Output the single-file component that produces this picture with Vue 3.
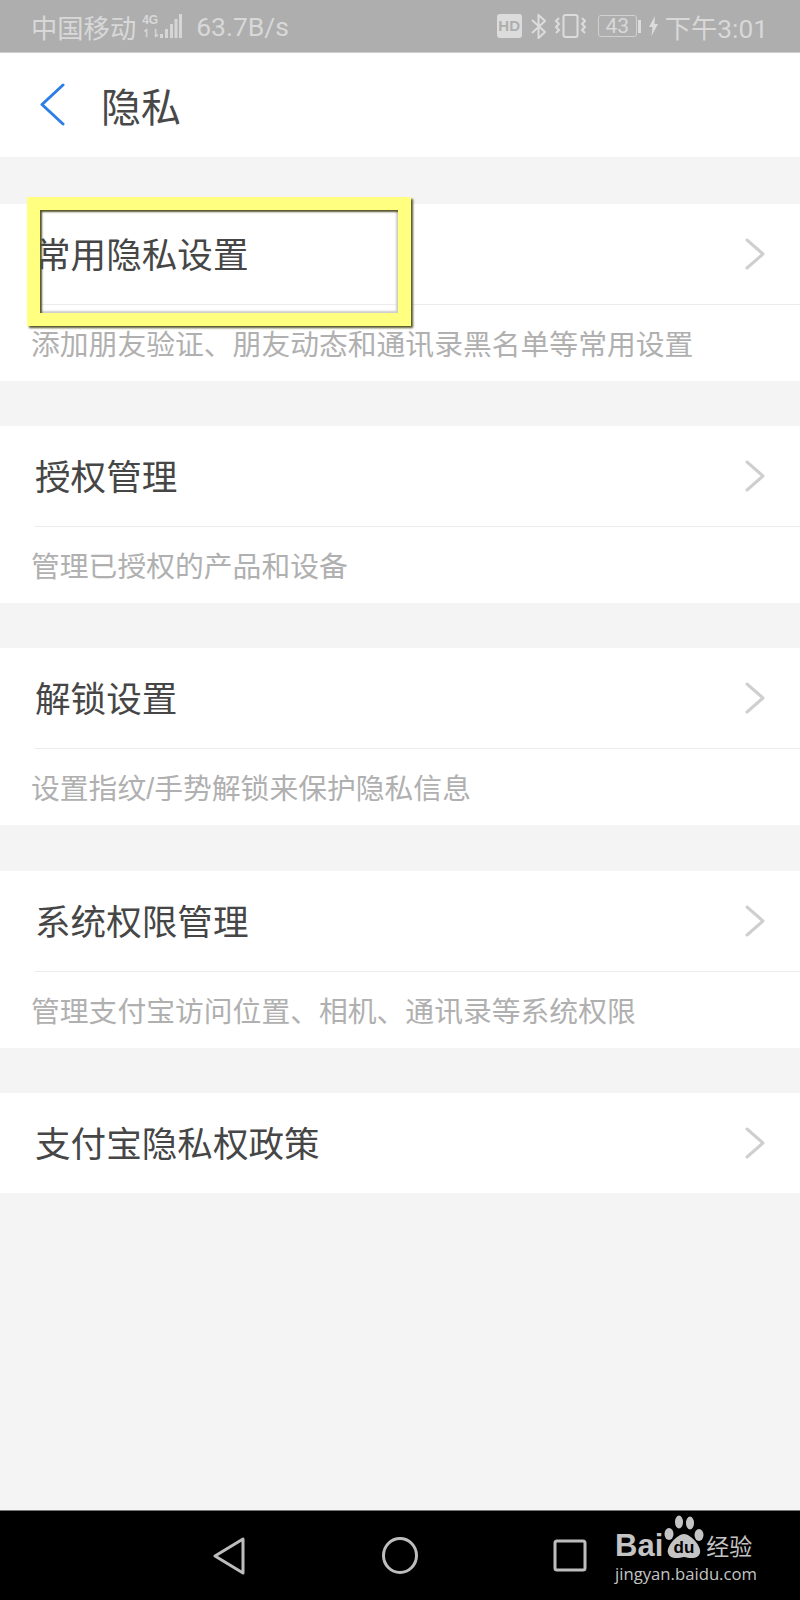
<template>
  <div class="page">
    <div class="status-bar">
      <div class="status-left">
        <span class="carrier">中国移动</span>
        <div class="signal">
          <div class="net">
            <span class="net-top">4G</span>
            <span class="net-arrows">↿⇂</span>
          </div>
          <svg width="22" height="25" viewBox="0 0 22 25">
            <rect x="0" y="20" width="3" height="4" fill="#d6d6d6" />
            <rect x="5" y="15" width="3" height="9" fill="#d6d6d6" />
            <rect x="10" y="10" width="3" height="14" fill="#d6d6d6" />
            <rect x="14.5" y="5" width="3" height="19" fill="#d6d6d6" />
            <rect x="19" y="0" width="3" height="24" fill="#d6d6d6" />
          </svg>
        </div>
        <span class="speed">63.7B/s</span>
      </div>
      <div class="status-right">
        <span class="hd">HD</span>
        <svg class="ic-bt" width="15" height="25" viewBox="0 0 15 25" fill="none" stroke="#dcdcdc" stroke-width="2">
          <path d="M1 6 L14 18 L7.5 24 V1 L14 7 L1 19" />
        </svg>
        <svg class="ic-vib" width="31" height="24" viewBox="0 0 31 24" fill="none" stroke="#dcdcdc" stroke-width="2">
          <rect x="8.5" y="1" width="14" height="22" rx="2" />
          <path d="M4 4 L1 7 L4 10 L1 13 L4 16 L1 19" />
          <path d="M27 4 L30 7 L27 10 L30 13 L27 16 L30 19" />
        </svg>
        <div class="battery">
          <span class="battery-body">43</span>
          <span class="battery-tip"></span>
        </div>
        <svg class="ic-bolt" width="9" height="20" viewBox="0 0 9 20">
          <path d="M6 0 L0 11 H3.5 L2.5 20 L9 8 H5.5 Z" fill="#dcdcdc" />
        </svg>
        <span class="time">下午3:01</span>
      </div>
    </div>

    <div class="title-bar">
      <svg class="back" width="26" height="44" viewBox="0 0 26 44" fill="none" stroke="#2c7fe6" stroke-width="3" stroke-linecap="round" stroke-linejoin="round">
        <path d="M23 2 L2 21.5 L23 41" />
      </svg>
      <span class="title">隐私</span>
    </div>

    <div class="list">
      <div v-for="item in items" :key="item.title" class="section">
        <div class="row">
          <span class="row-title">{{ item.title }}</span>
          <svg width="20" height="32" viewBox="0 0 20 32" fill="none" stroke="#cfcfcf" stroke-width="3" stroke-linecap="round" stroke-linejoin="round">
            <path d="M2 2 L18 16 L2 30" />
          </svg>
        </div>
        <div v-if="item.desc" class="desc">{{ item.desc }}</div>
      </div>
    </div>

    <div class="nav-bar">
      <svg class="nav-back" width="32" height="38" viewBox="0 0 32 38" fill="none" stroke="#bdbdbd" stroke-width="3" stroke-linejoin="round">
        <path d="M30 2 V36 L2 19 Z" />
      </svg>
      <svg class="nav-home" width="36" height="37" viewBox="0 0 36 37" fill="none" stroke="#bdbdbd" stroke-width="3">
        <ellipse cx="18" cy="18.5" rx="16.5" ry="17" />
      </svg>
      <svg class="nav-recent" width="34" height="33" viewBox="0 0 34 33" fill="none" stroke="#bdbdbd" stroke-width="3">
        <rect x="2" y="2" width="30" height="29" rx="2" />
      </svg>
    </div>

    <!-- 标注框 -->
    <div class="highlight"></div>

    <!-- 水印 -->
    <div class="watermark">
      <div class="wm-top">
        <span class="wm-bai">Bai</span>
        <svg class="wm-paw" width="42" height="45" viewBox="0 0 42 45">
          <ellipse cx="16" cy="7" rx="4" ry="6.5" fill="#c4c4c4" />
          <ellipse cx="27" cy="8" rx="4" ry="6.5" fill="#c4c4c4" />
          <ellipse cx="6" cy="19" rx="4.5" ry="6" fill="#c4c4c4" />
          <ellipse cx="36" cy="20" rx="4.5" ry="6" fill="#c4c4c4" />
          <path d="M21 19 C28 19 39 32 37 38 C35 45 26 43 21 42 C16 43 7 45 5 38 C3 32 14 19 21 19 Z" fill="#c4c4c4" />
          <text x="21" y="38" text-anchor="middle" class="wm-du">du</text>
        </svg>
        <span class="wm-cn">经验</span>
      </div>
      <div class="wm-url">jingyan.baidu.com</div>
    </div>
  </div>
</template>

<script setup>
const items = [
  { title: '常用隐私设置', desc: '添加朋友验证、朋友动态和通讯录黑名单等常用设置' },
  { title: '授权管理', desc: '管理已授权的产品和设备' },
  { title: '解锁设置', desc: '设置指纹/手势解锁来保护隐私信息' },
  { title: '系统权限管理', desc: '管理支付宝访问位置、相机、通讯录等系统权限' },
  { title: '支付宝隐私权政策', desc: '' }
]
</script>

<style>
body {
  background: #f4f4f4;
}
</style>

<style scoped>
.page {
  position: relative;
  width: 800px;
  height: 1600px;
  display: flex;
  flex-direction: column;
  background: #f4f4f4;
  overflow: hidden;
  font-family: "Liberation Sans", "Noto Sans CJK SC", sans-serif;
}

.status-bar {
  height: 53px;
  flex: none;
  box-sizing: border-box;
  padding: 0 32px 0 31px;
  background: #aeaeae;
  border-bottom: 1px solid #cfcfcf;
  display: flex;
  justify-content: space-between;
  align-items: center;
  color: #d8d8d8;
}

.status-left,
.status-right {
  display: flex;
  align-items: center;
}

.carrier {
  font-size: 26.3px;
}

.signal {
  display: flex;
  align-items: flex-end;
  margin-left: 6px;
}

.net {
  display: flex;
  flex-direction: column;
  width: 18px;
  line-height: 1;
  font-weight: bold;
}

.net-top {
  font-size: 12px;
  line-height: 12px;
}

.net-arrows {
  font-size: 11px;
  line-height: 11px;
  margin-top: 2px;
}

.speed {
  font-family: Roboto, "Liberation Sans", sans-serif;
  font-size: 26.5px;
  margin-left: 14px;
}

.hd {
  width: 25px;
  height: 24px;
  background: #dcdcdc;
  color: #aeaeae;
  border-radius: 3px;
  font-size: 15px;
  font-weight: bold;
  line-height: 24px;
  text-align: center;
}

.ic-bt {
  margin-left: 9px;
}

.ic-vib {
  margin-left: 9px;
}

.battery {
  display: flex;
  align-items: center;
  margin-left: 12px;
}

.battery-body {
  width: 37px;
  height: 20px;
  border: 1px solid #d0d0d0;
  border-radius: 3px;
  font-size: 21px;
  line-height: 20px;
  text-align: center;
  font-family: Roboto, sans-serif;
}

.battery-tip {
  width: 3px;
  height: 13px;
  margin-left: 1px;
  background: #dcdcdc;
}

.ic-bolt {
  margin-left: 8px;
}

.time {
  font-family: Roboto, "Noto Sans CJK SC", sans-serif;
  font-size: 26.3px;
  margin-left: 7px;
}

.title-bar {
  height: 105px;
  flex: none;
  box-sizing: border-box;
  display: flex;
  align-items: center;
  padding-left: 40px;
  background: #fff;
  border-bottom: 1px solid #f2f2f2;
}

.title {
  margin-left: 35px;
  font-size: 40px;
  color: #484848;
}

.list {
  display: flex;
  flex-direction: column;
  gap: 45.2px;
  padding-top: 46px;
}

.section {
  background: #fff;
}

.row {
  height: 100px;
  box-sizing: border-box;
  margin-left: 35px;
  padding-right: 35px;
  display: flex;
  justify-content: space-between;
  align-items: center;
}

.row + .desc {
  border-top: 1px solid #ececec;
  margin-left: 35px;
}

.row-title {
  font-size: 35.6px;
  color: #464646;
  margin-bottom: 3px;
}

.desc {
  height: 77px;
  box-sizing: border-box;
  text-indent: -4px;
  font-size: 28.8px;
  line-height: 81px;
  color: #b0b0b0;
}

.nav-bar {
  position: absolute;
  left: 0;
  right: 0;
  bottom: 0;
  height: 90px;
  background: #000;
  border-top: 1px solid #777;
  box-sizing: border-box;
  display: flex;
  align-items: center;
}

.nav-back {
  margin-left: 213px;
}

.nav-home {
  margin-left: 137px;
}

.nav-recent {
  margin-left: 135px;
}

.highlight {
  position: absolute;
  left: 27px;
  top: 197px;
  width: 384px;
  height: 129px;
  box-sizing: border-box;
  border: 13px solid #ffff80;
  box-shadow: 2px 2px 2px #55552a, inset 2px 2px 2px #55552a, inset -2px -2px 2px #cccccc;
}

.watermark {
  position: absolute;
  left: 615px;
  top: 1515px;
  width: 145px;
  color: #c4c4c4;
}

.wm-top {
  display: flex;
  align-items: flex-end;
  height: 45px;
}

.wm-bai {
  font-size: 31px;
  font-weight: bold;
  line-height: 31px;
  margin-bottom: -1px;
}

.wm-du {
  font-size: 17px;
  font-weight: bold;
  fill: #000;
}

.wm-cn {
  font-size: 23px;
  line-height: 26px;
  margin-left: 1px;
  white-space: nowrap;
}

.wm-url {
  font-family: "Open Sans", sans-serif;
  font-size: 16.7px;
  line-height: 20px;
  margin-top: 4px;
  white-space: nowrap;
}
</style>
